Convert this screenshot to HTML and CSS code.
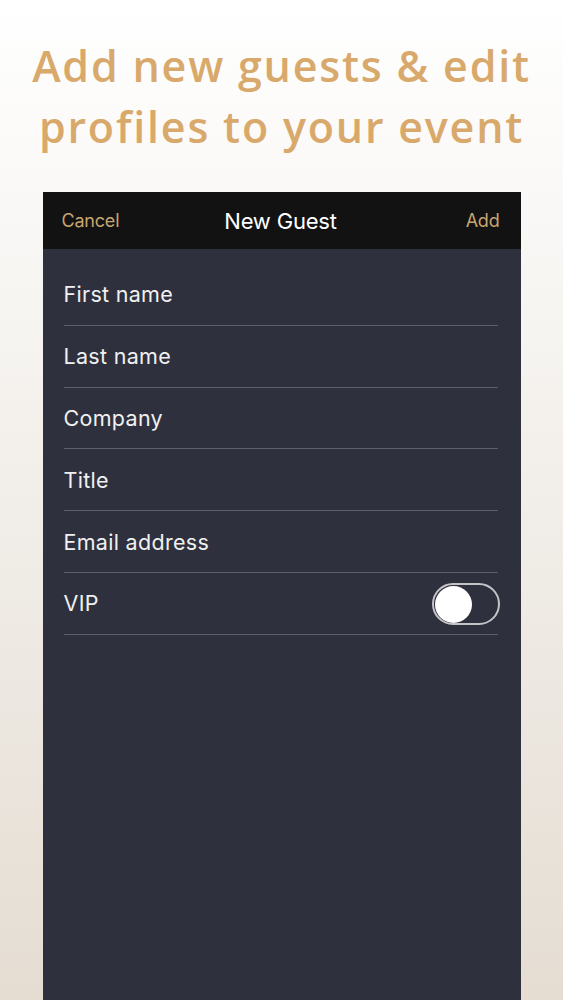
FILE: index.html
```html
<!DOCTYPE html>
<html>
<head>
<meta charset="utf-8">
<link rel="stylesheet" href="styles.css">
</head>
<body>
<div class="page">
  <h1 class="headline">Add new guests &amp; edit<br>profiles to your event</h1>
  <div class="phone">
    <div class="navbar">
      <span class="nav-btn nav-left">Cancel</span>
      <span class="nav-title">New Guest</span>
      <span class="nav-btn nav-right">Add</span>
    </div>
    <div class="form">
      <div class="row"><span>First name</span></div>
      <div class="row"><span>Last name</span></div>
      <div class="row"><span>Company</span></div>
      <div class="row"><span>Title</span></div>
      <div class="row"><span>Email address</span></div>
      <div class="row"><span>VIP</span><span class="toggle"><span class="knob"></span></span></div>
    </div>
  </div>
</div>
</body>
</html>
```

FILE: styles.css
```css
html, body {
  margin: 0;
  padding: 0;
}
body {
  width: 563px;
  height: 1000px;
  overflow: hidden;
  background: linear-gradient(to bottom, #ffffff 0%, #f7f5f2 30%, #ece7e0 70%, #e5ddd2 100%);
  font-family: "Inter", "Liberation Sans", sans-serif;
}
.page {
  display: flex;
  flex-direction: column;
  align-items: center;
  height: 1000px;
}
.headline {
  margin: 35px 0 0 0;
  font-family: "Open Sans", sans-serif;
  font-weight: 600;
  font-size: 43px;
  line-height: 61px;
  letter-spacing: 1.8px;
  color: #d8a96b;
  text-align: center;
  white-space: nowrap;
}
.phone {
  margin-top: 35px;
  width: 478px;
  flex: 1;
  background: #2e303d;
  display: flex;
  flex-direction: column;
}
.navbar {
  height: 57px;
  background: #121213;
  display: grid;
  grid-template-columns: 1fr auto 1fr;
  align-items: center;
  padding: 0 21px 0 19px;
}
.nav-btn {
  color: #c9a56e;
  font-size: 18px;
  letter-spacing: -0.2px;
}
.nav-right {
  justify-self: end;
}
.nav-title {
  color: #ffffff;
  font-size: 22px;
  letter-spacing: -0.2px;
}
.form {
  padding: 15px 23px 0 21px;
}
.row {
  height: 61.8px;
  box-sizing: border-box;
  border-bottom: 1.5px solid #5c5e6a;
  display: flex;
  align-items: center;
  justify-content: space-between;
  color: #f0f0f2;
  font-size: 21.5px;
  letter-spacing: 0.3px;
}
.toggle {
  width: 62px;
  height: 38px;
  border: 2px solid #c4c4c8;
  border-radius: 21px;
  display: flex;
  align-items: center;
  padding: 0 1px;
  margin-right: -2px;
  margin-top: 2px;
}
.knob {
  width: 37px;
  height: 37px;
  border-radius: 50%;
  background: #ffffff;
}
```
